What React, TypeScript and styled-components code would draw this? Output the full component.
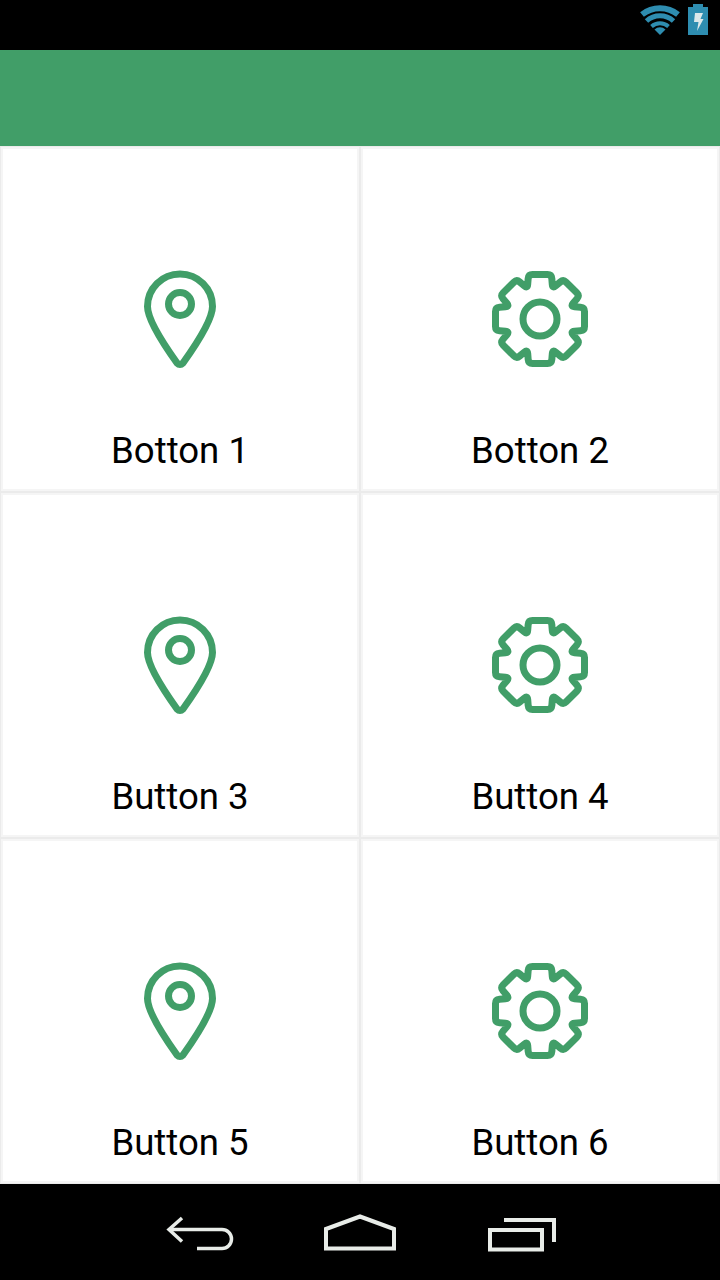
import styled, { createGlobalStyle } from 'styled-components'

const GREEN = '#419e68'

const GlobalStyle = createGlobalStyle`
    html, body {
        margin: 0;
        padding: 0;
        background: #000;
    }
    * {
        box-sizing: border-box;
    }
`
const Screen = styled.div`
    width: 720px;
    height: 1280px;
    display: flex;
    flex-direction: column;
    overflow: hidden;
    font-family: Roboto, "Liberation Sans", sans-serif;
`
const StatusBar = styled.div`
    height: 50px;
    flex-shrink: 0;
    background: #000;
    display: flex;
    justify-content: flex-end;
    gap: 8px;
    padding: 4px 12px 0 0;
    svg {
        display: block;
    }
`
const Header = styled.div`
    height: 96px;
    flex-shrink: 0;
    background: ${GREEN};
`
const Grid = styled.div`
    flex: 1;
    min-height: 0;
    display: grid;
    grid-template-columns: 358px 358px;
    grid-auto-rows: 344px;
    gap: 2px;
    padding: 1px;
    background: #ebebeb;
`
const Cell = styled.div`
    display: flex;
    flex-direction: column;
    align-items: center;
    background: #fff;
    border: 2px solid #f5f5f5;
`
const IconSlot = styled.div`
    height: 104px;
    margin-top: 118px;
    svg {
        display: block;
    }
`
const Label = styled.span`
    margin-top: 59px;
    font-size: 36.6px;
    line-height: 42px;
    color: #000;
`
const NavBar = styled.div`
    height: 96px;
    flex-shrink: 0;
    background: #000;
    display: flex;
    justify-content: center;
    align-items: center;
`
const NavSlot = styled.div`
    width: 160px;
    display: flex;
    justify-content: center;
    svg {
        display: block;
    }
`

// rounds the corners of a closed polygon, used for the gear outline
const roundedPath = (pts: number[][], r: number) => {
    const n = pts.length
    let d = ''
    pts.forEach((p, i) => {
        const prev = pts[(i + n - 1) % n]
        const next = pts[(i + 1) % n]
        const toward = (a: number[], b: number[]) => {
            const len = Math.hypot(b[0] - a[0], b[1] - a[1])
            const t = Math.min(r, len / 2) / len
            return [a[0] + (b[0] - a[0]) * t, a[1] + (b[1] - a[1]) * t]
        }
        const a = toward(p, prev)
        const b = toward(p, next)
        d += `${i === 0 ? 'M' : 'L'}${a[0].toFixed(2)} ${a[1].toFixed(2)} Q${p[0]} ${p[1]} ${b[0].toFixed(2)} ${b[1].toFixed(2)} `
    })
    return d + 'Z'
}

const gearPoints = () => {
    const tooth = [[-11.5, -44.5], [11.5, -44.5], [12.6, -30.5]]
    const pts: number[][] = []
    for (let k = 0; k < 8; k++) {
        const ang = (k * Math.PI) / 4
        const c = Math.cos(ang)
        const s = Math.sin(ang)
        tooth.forEach(([x, y]) => {
            pts.push([+(52 + x * c - y * s).toFixed(2), +(52 + x * s + y * c).toFixed(2)])
        })
    }
    return pts
}
const GEAR_PATH = roundedPath(gearPoints(), 4)

const PinIcon = () => (
    <svg width="80" height="104" viewBox="0 0 80 104" fill="none" stroke={GREEN} strokeWidth="7" strokeLinejoin="round">
        <path d="M40 7A32.5 32.5 0 0 1 72.5 39.5C72.5 52 58 75 43 96Q40 99 37 96C22 75 7.5 52 7.5 39.5A32.5 32.5 0 0 1 40 7Z" />
        <circle cx="40" cy="37" r="11.5" />
    </svg>
)

const GearIcon = () => (
    <svg width="104" height="104" viewBox="0 0 104 104" fill="none" stroke={GREEN} strokeWidth="7" strokeLinejoin="round">
        <path d={GEAR_PATH} />
        <circle cx="52" cy="52" r="17" />
    </svg>
)

const WifiIcon = () => (
    <svg width="40" height="32" viewBox="0 0 40 32" fill="none" stroke="#2e8db0">
        <path d="M2 10.5A29 29 0 0 1 38 10.5" strokeWidth="6" />
        <path d="M6.5 17A20 20 0 0 1 33.5 17" strokeWidth="5" />
        <path d="M11.5 22.5A13 13 0 0 1 28.5 22.5" strokeWidth="4" />
        <path d="M20 31L14.5 25.5A8 8 0 0 1 25.5 25.5Z" fill="#2e8db0" stroke="none" />
    </svg>
)

const BatteryIcon = () => (
    <svg width="20" height="32" viewBox="0 0 20 32">
        <path d="M5 0H15V3H20V31H0V3H5Z" fill="#2e8db0" />
        <path d="M7 9H15L12.5 15H15.5L9 27L10.5 18H6Z" fill="#dce8ea" />
    </svg>
)

const BackIcon = () => (
    <svg width="80" height="48" viewBox="0 0 80 48" fill="none" stroke="#e8ece8" strokeWidth="3.5">
        <path d="M22 10L9 21.5L22 33.5" />
        <path d="M9 21.5H62A9.5 9.5 0 0 1 62 40.5H37" />
    </svg>
)

const HomeIcon = () => (
    <svg width="80" height="48" viewBox="0 0 80 48" fill="none" stroke="#e8ece8" strokeWidth="4">
        <path d="M6 21L40 8.5L74 21V40.5H6Z" />
    </svg>
)

const RecentsIcon = () => (
    <svg width="80" height="48" viewBox="0 0 80 48" fill="none" stroke="#e8ece8" strokeWidth="4">
        <rect x="10" y="22" width="52" height="19.5" />
        <path d="M24 12H74V34" />
    </svg>
)

const buttons = [
    { label: 'Botton 1', icon: <PinIcon /> },
    { label: 'Botton 2', icon: <GearIcon /> },
    { label: 'Button 3', icon: <PinIcon /> },
    { label: 'Button 4', icon: <GearIcon /> },
    { label: 'Button 5', icon: <PinIcon /> },
    { label: 'Button 6', icon: <GearIcon /> },
]

export default function App() {
    return (
        <Screen>
            <GlobalStyle />
            <StatusBar>
                <WifiIcon />
                <BatteryIcon />
            </StatusBar>
            <Header />
            <Grid>
                {buttons.map(btn => (
                    <Cell key={btn.label}>
                        <IconSlot>{btn.icon}</IconSlot>
                        <Label>{btn.label}</Label>
                    </Cell>
                ))}
            </Grid>
            <NavBar>
                <NavSlot><BackIcon /></NavSlot>
                <NavSlot><HomeIcon /></NavSlot>
                <NavSlot><RecentsIcon /></NavSlot>
            </NavBar>
        </Screen>
    )
}
